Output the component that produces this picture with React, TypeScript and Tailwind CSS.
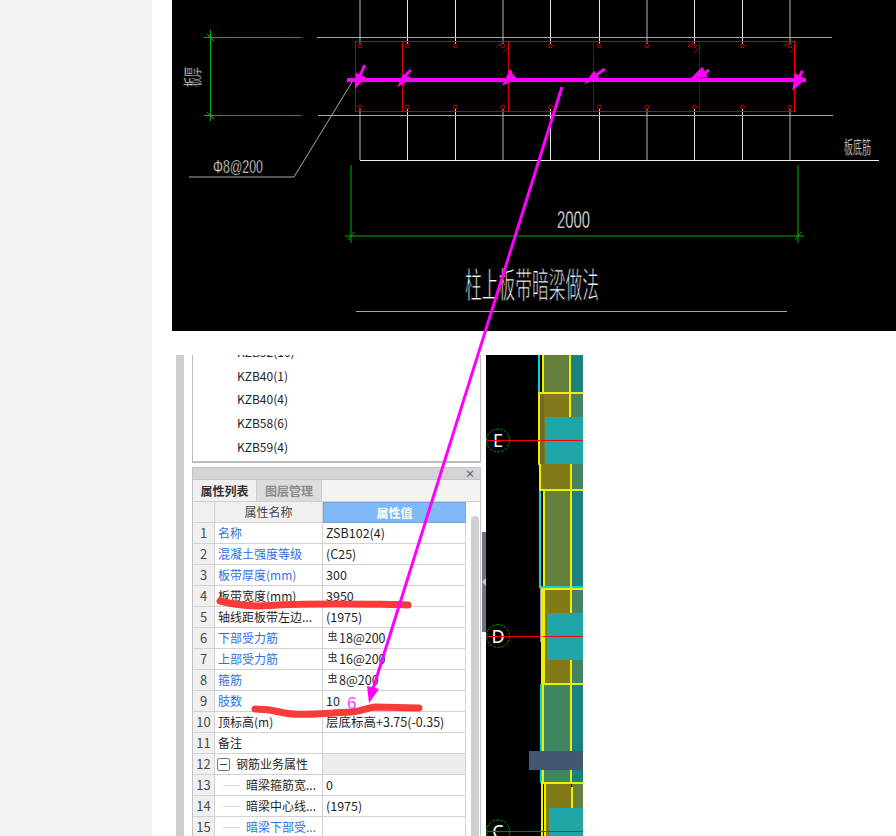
const rows: { name: string; value?: string; rebar?: boolean; blue?: boolean; kind?: "section" | "child" }[] = [
  { name: "名称", value: "ZSB102(4)", blue: true },
  { name: "混凝土强度等级", value: "(C25)", blue: true },
  { name: "板带厚度(mm)", value: "300", blue: true },
  { name: "板带宽度(mm)", value: "3950" },
  { name: "轴线距板带左边...", value: "(1975)" },
  { name: "下部受力筋", value: "18@200", rebar: true, blue: true },
  { name: "上部受力筋", value: "16@200", rebar: true, blue: true },
  { name: "箍筋", value: "8@200", rebar: true, blue: true },
  { name: "肢数", value: "10", blue: true },
  { name: "顶标高(m)", value: "层底标高+3.75(-0.35)" },
  { name: "备注" },
  { name: "钢筋业务属性", kind: "section" },
  { name: "暗梁箍筋宽...", value: "0", kind: "child" },
  { name: "暗梁中心线...", value: "(1975)", kind: "child" },
  { name: "暗梁下部受...", kind: "child", blue: true },
];

const verticals = [360, 407.5, 455.5, 503, 550.5, 599.5, 647, 694.5, 742.5, 790];
const dividers = [402.5, 508.5, 593.5, 699.5];
const arrows = [
  { tail: "364.7,65 359,78", head: "354.7,89.3 356,72.7 366,77.3" },
  { tail: "410.7,70 404,77", head: "397.3,87.3 402.7,74 412,78.3" },
  { tail: "510,70 512,78", head: "502,85.7 509.3,70.7 517.7,79" },
  { tail: "604.7,69 595,76", head: "584,84 594,70.7 600,79" },
  { tail: "709,70 702,75", head: "690.7,78.3 702.3,66.7 708,77.3" },
  { tail: "802.3,70.7 799,78", head: "792.3,90.7 794.7,72.7 805.7,79.3" },
];
const cadFont = "'Liberation Sans','Noto Sans CJK SC',sans-serif";

function TopDrawing() {
  return (
    <svg viewBox="172 0 724 331" className="block w-[724px] h-[331px] bg-black shrink-0">
      {verticals.map((x, i) => (
        <g key={x} stroke={i % 3 === 0 ? "#b8b8b8" : "#e8e8e8"} strokeWidth="1">
          <line x1={x} y1="0" x2={x} y2="44" />
          <line x1={x} y1="109" x2={x} y2="160" />
        </g>
      ))}
      <g stroke="#a8a8a8" strokeWidth="1">
        <line x1="317" y1="37.5" x2="832" y2="37.5" />
        <line x1="318" y1="115.5" x2="833" y2="115.5" />
        <line x1="189" y1="177" x2="294" y2="177" />
        <line x1="294" y1="177" x2="352" y2="82" />
        <line x1="356" y1="311.5" x2="787" y2="311.5" strokeWidth="1" />
      </g>
      <line x1="360" y1="160.5" x2="879" y2="160.5" stroke="#f0f0f0" />
      <g stroke="#00b000" strokeWidth="1">
        <line x1="204" y1="37.5" x2="301" y2="37.5" />
        <line x1="204" y1="115.5" x2="301" y2="115.5" />
        <line x1="210.5" y1="30" x2="210.5" y2="121" />
        <line x1="207" y1="34" x2="214" y2="41" />
        <line x1="207" y1="112" x2="214" y2="119" />
      </g>
      <g stroke="#007a00" strokeWidth="1.5">
        <line x1="351" y1="165" x2="351" y2="243" />
        <line x1="798" y1="165" x2="798" y2="243" />
        <line x1="345" y1="236" x2="804" y2="236" />
      </g>
      <g stroke="#00b000" strokeWidth="1">
        <line x1="348" y1="240" x2="354" y2="232" />
        <line x1="795" y1="240" x2="801" y2="232" />
      </g>
      <rect x="355.5" y="41.5" width="439" height="70" fill="none" stroke="#c00000" strokeWidth="1" />
      <line x1="794.5" y1="41" x2="794.5" y2="112" stroke="#f00000" />
      {dividers.map((x, i) => (
        <line key={x} x1={x} y1="41" x2={x} y2="112" stroke={i < 2 ? "#e00000" : "#800000"} />
      ))}
      {verticals.map((x) => (
        <g key={x} fill="none" stroke="#c00000" strokeWidth="1">
          <circle cx={x} cy="45.7" r="1.9" />
          <circle cx={x} cy="107" r="1.9" />
        </g>
      ))}
      <g stroke="#c00000" strokeWidth="1">
        <line x1="496.3" y1="47.3" x2="501.3" y2="42.7" />
        <line x1="503" y1="52.7" x2="507.7" y2="48" />
        <line x1="687.7" y1="47.3" x2="692.7" y2="42.3" />
        <line x1="694" y1="52.7" x2="699.3" y2="48" />
        <line x1="783.3" y1="46.7" x2="788.3" y2="42.3" />
        <line x1="789.7" y1="52.7" x2="794.7" y2="48" />
      </g>
      <line x1="347" y1="80" x2="806" y2="80" stroke="#ff00ff" strokeWidth="4" />
      {arrows.map((a) => (
        <g key={a.head}>
          <polyline points={a.tail} fill="none" stroke="#ff00ff" strokeWidth="3" />
          <polygon points={a.head} fill="#ff00ff" />
        </g>
      ))}
      <g fill="#ffffff" stroke="#000000" strokeWidth="0.5" fontFamily={cadFont}>
        <text x="213" y="173" fontSize="19" textLength="50" lengthAdjust="spacingAndGlyphs">Φ8@200</text>
        <text x="557" y="228" fontSize="23" textLength="33" lengthAdjust="spacingAndGlyphs">2000</text>
        <text x="844" y="154" fontSize="18" textLength="27" lengthAdjust="spacingAndGlyphs">板底筋</text>
        <text transform="translate(200 87) rotate(-90)" fontSize="19" textLength="20" lengthAdjust="spacingAndGlyphs">板厚</text>
        <text x="465" y="298" fontSize="35" textLength="134" lengthAdjust="spacingAndGlyphs" strokeWidth="1">柱上板带暗梁做法</text>
      </g>
    </svg>
  );
}

function Axis({ cy, label }: { cy: number; label: string }) {
  return (
    <g>
      <circle cx="498" cy={cy} r="11.5" fill="black" stroke="#009000" strokeWidth="1" strokeDasharray="3 1" />
      <text x="498" y={cy + 6.5} textAnchor="middle" fontSize="18" fill="white" fontFamily="'Noto Sans',sans-serif">{label}</text>
    </g>
  );
}

function SideCad() {
  const olive = "#65803c";
  const dark = "#827a18";
  const teal = "#1a8080";
  const sea = "#458463";
  const box = "#20a6a6";
  const y = "#eeee00";
  const c = "#00d8d8";
  return (
    <svg viewBox="486 355 97 481" className="block w-[97px] h-[481px] bg-black shrink-0">
      <rect x="544" y="355" width="26" height="37" fill={olive} />
      <rect x="570" y="355" width="13" height="37" fill={teal} />
      <rect x="540" y="394" width="30" height="95" fill={dark} />
      <rect x="540" y="394" width="4" height="70" fill="#6e6a2e" />
      <rect x="570" y="394" width="13" height="95" fill={sea} />
      <rect x="544" y="491" width="26" height="95" fill={olive} />
      <rect x="570" y="491" width="13" height="95" fill={teal} />
      <rect x="545" y="588" width="25" height="95" fill={dark} />
      <rect x="570" y="588" width="13" height="95" fill={sea} />
      <rect x="544" y="685" width="26" height="98" fill="#3f8560" />
      <rect x="570" y="685" width="13" height="98" fill={teal} />
      <rect x="544" y="784" width="27" height="52" fill={dark} />
      <rect x="572" y="784" width="11" height="52" fill={olive} />
      <rect x="538" y="355" width="2" height="37" fill={c} />
      <rect x="539" y="491" width="2" height="95" fill={c} />
      <rect x="539" y="586" width="44" height="2" fill={c} />
      <rect x="540" y="684" width="2" height="99" fill={c} />
      <rect x="542" y="355" width="2" height="37" fill={y} />
      <rect x="569" y="355" width="2" height="62" fill={y} />
      <rect x="538" y="392" width="45" height="2" fill={y} />
      <rect x="538" y="392" width="2" height="73" fill={y} />
      <rect x="539" y="464" width="2" height="27" fill={y} />
      <rect x="570" y="464" width="2" height="320" fill={y} />
      <rect x="539" y="489" width="44" height="2" fill={y} />
      <rect x="543" y="491" width="2" height="95" fill={y} />
      <rect x="541" y="588" width="42" height="2" fill={y} />
      <rect x="541" y="590" width="4" height="94" fill={y} />
      <rect x="542" y="683" width="41" height="2" fill={y} />
      <rect x="542" y="685" width="2" height="98" fill={y} />
      <rect x="541" y="782" width="42" height="2" fill={y} />
      <rect x="541" y="784" width="2" height="52" fill={y} />
      <rect x="544" y="784" width="2" height="52" fill={y} />
      <rect x="571" y="787" width="2" height="30" fill={y} />
      <rect x="540" y="586" width="1" height="56" fill="#9a9a9a" />
      <rect x="545" y="417" width="38" height="47" fill={box} />
      <rect x="547" y="613" width="36" height="47" fill={box} />
      <rect x="549" y="808" width="34" height="28" fill={box} />
      <rect x="529" y="751" width="54" height="19" fill="#415870" />
      <Axis cy={440.5} label="E" />
      <Axis cy={636} label="D" />
      <Axis cy={831.5} label="C" />
      <g stroke="#ff0000" strokeWidth="1">
        <line x1="487" y1="440.5" x2="583" y2="440.5" />
        <line x1="487" y1="636.5" x2="541" y2="636.5" />
        <line x1="543" y1="636.5" x2="583" y2="636.5" />
        <line x1="487" y1="831.5" x2="583" y2="831.5" />
      </g>
    </svg>
  );
}

function PropertyRow({ row, index }: { row: (typeof rows)[number]; index: number }) {
  const color = row.blue ? "text-[#2f6fe4]" : "text-[#1f1f1f]";
  return (
    <div className="grid grid-cols-[22px_108px_143px] h-[21px] border-b border-[#d2d2d2] shrink-0 leading-[20px]">
      <div className="bg-[#f0f0f0] border-r border-[#d2d2d2] text-center text-[#4a4a4a] text-[13px]">{index + 1}</div>
      <div className={`border-r border-[#d2d2d2] flex items-center whitespace-nowrap overflow-hidden text-[12px] ${color} ${row.kind === "section" ? "pl-[2px]" : row.kind === "child" ? "pl-[8px]" : "pl-[3px]"}`}>
        {row.kind === "section" && (
          <span className="w-[13px] h-[13px] mr-[6px] border border-[#777] rounded-[2px] flex items-center justify-center shrink-0">
            <span className="w-[7px] h-px bg-[#444]" />
          </span>
        )}
        {row.kind === "child" && <span className="w-[17px] h-px bg-[#dcdcdc] mr-[6px] shrink-0" />}
        {row.name}
      </div>
      <div className={`border-r border-[#d2d2d2] pl-[3px] text-[#1f1f1f] whitespace-nowrap overflow-hidden ${row.kind === "section" ? "bg-[#ececec]" : ""}`}>
        {row.rebar && <span className="text-[10px] relative -top-[3px] px-[1.5px]">虫</span>}
        {row.value}
      </div>
    </div>
  );
}

function Panel() {
  return (
    <div className="w-[290px] h-[481px] flex flex-col shrink-0 text-[12.5px] font-['Noto_Sans_CJK_SC','Noto_Sans',sans-serif] overflow-hidden">
      <div className="h-[108px] shrink-0 border-x border-b-2 border-[#bdbdbd] overflow-hidden pl-[44px] text-[#222] mr-px">
        <div className="-mt-[15px] flex flex-col text-[12px]">
          {["KZB32(10)", "KZB40(1)", "KZB40(4)", "KZB58(6)", "KZB59(4)"].map((k) => (
            <div key={k} className="h-[23.7px] leading-[24px]">{k}</div>
          ))}
        </div>
      </div>
      <div className="mt-[4px] flex-1 min-h-0 flex flex-col border-x border-t border-[#c4c4c8] mr-px">
        <div className="h-[11px] bg-[#d3d4d8] border-b border-[#c4c4c8] box-content flex items-center justify-end pr-[5px] text-[#666] text-[10px] font-bold shrink-0">×</div>
        <div className="h-[22px] bg-[#f3f3f3] border-b border-[#cfcfcf] flex shrink-0 leading-[21px] text-[12px]">
          <div className="w-[64px] text-center bg-[#f0f0f0] text-[#333] font-bold border-r border-[#cfcfcf]">属性列表</div>
          <div className="w-[65px] text-center bg-[#dcdcdc] text-[#8a8a8a] font-bold border-r border-[#cfcfcf]">图层管理</div>
        </div>
        <div className="flex flex-1 min-h-0">
          <div className="w-[273px] flex flex-col shrink-0 overflow-hidden">
            <div className="grid grid-cols-[22px_108px_143px] h-[21px] shrink-0 leading-[19px] text-[12px]">
              <div className="bg-[#f0f0f0] border-r border-b border-[#d2d2d2]" />
              <div className="bg-[#f0f0f0] border-r border-b border-[#d2d2d2] text-center text-[#444]">属性名称</div>
              <div className="bg-[#7fb9f7] border border-[#6aa8ea] text-center text-white font-bold">属性值</div>
            </div>
            {rows.map((r, i) => (
              <PropertyRow key={r.name} row={r} index={i} />
            ))}
          </div>
          <div className="w-[15px] shrink-0 pl-[5px] pt-[14px]">
            <div className="w-[8px] h-full bg-[#cfcfcf] rounded-t-[4px]" />
          </div>
        </div>
      </div>
    </div>
  );
}

function Splitter() {
  return (
    <div className="w-[4px] h-[481px] shrink-0 flex flex-col pt-[177px]">
      <div className="h-[100px] bg-[#6c7686] flex items-center">
        <span className="w-0 h-0 border-y-[4px] border-y-transparent border-r-[4px] border-r-[#c8ccd2]" />
      </div>
    </div>
  );
}

export default function App() {
  return (
    <div className="relative w-[896px] h-[836px] overflow-hidden flex bg-white">
      <div className="w-[152px] h-full bg-[#f2f3f5] shrink-0" />
      <div className="flex-1 pl-5 flex flex-col min-w-0">
        <TopDrawing />
        <div className="mt-6 flex h-[481px]">
          <div className="w-[20px] shrink-0 flex pl-[4px]">
            <div className="w-[8px] h-full bg-[#cdcdcd]" />
          </div>
          <Panel />
          <Splitter />
          <SideCad />
        </div>
      </div>
      <svg viewBox="0 0 896 836" className="absolute inset-0 w-[896px] h-[836px] pointer-events-none">
        <path d="M220 601 C232 604 250 607 270 605.5 C300 603 350 604 400 604.5 L408 605" fill="none" stroke="#fb3a3a" strokeWidth="7" strokeLinecap="round" strokeLinejoin="round" />
        <path d="M255 709 C265 709 272 710 280 712 C295 716 310 714 352 712 C362 711 366 708 375 707 L419 708" fill="none" stroke="#fb3a3a" strokeWidth="7" strokeLinecap="round" strokeLinejoin="round" />
        <line x1="562" y1="87" x2="373" y2="689" stroke="#ff00ff" strokeWidth="3" />
        <polygon points="369,703 367,686 379,689" fill="#ff00ff" />
        <text x="347" y="709" fontSize="17" fill="#ff40ff" fontFamily="'Liberation Sans',sans-serif">6</text>
      </svg>
    </div>
  );
}
